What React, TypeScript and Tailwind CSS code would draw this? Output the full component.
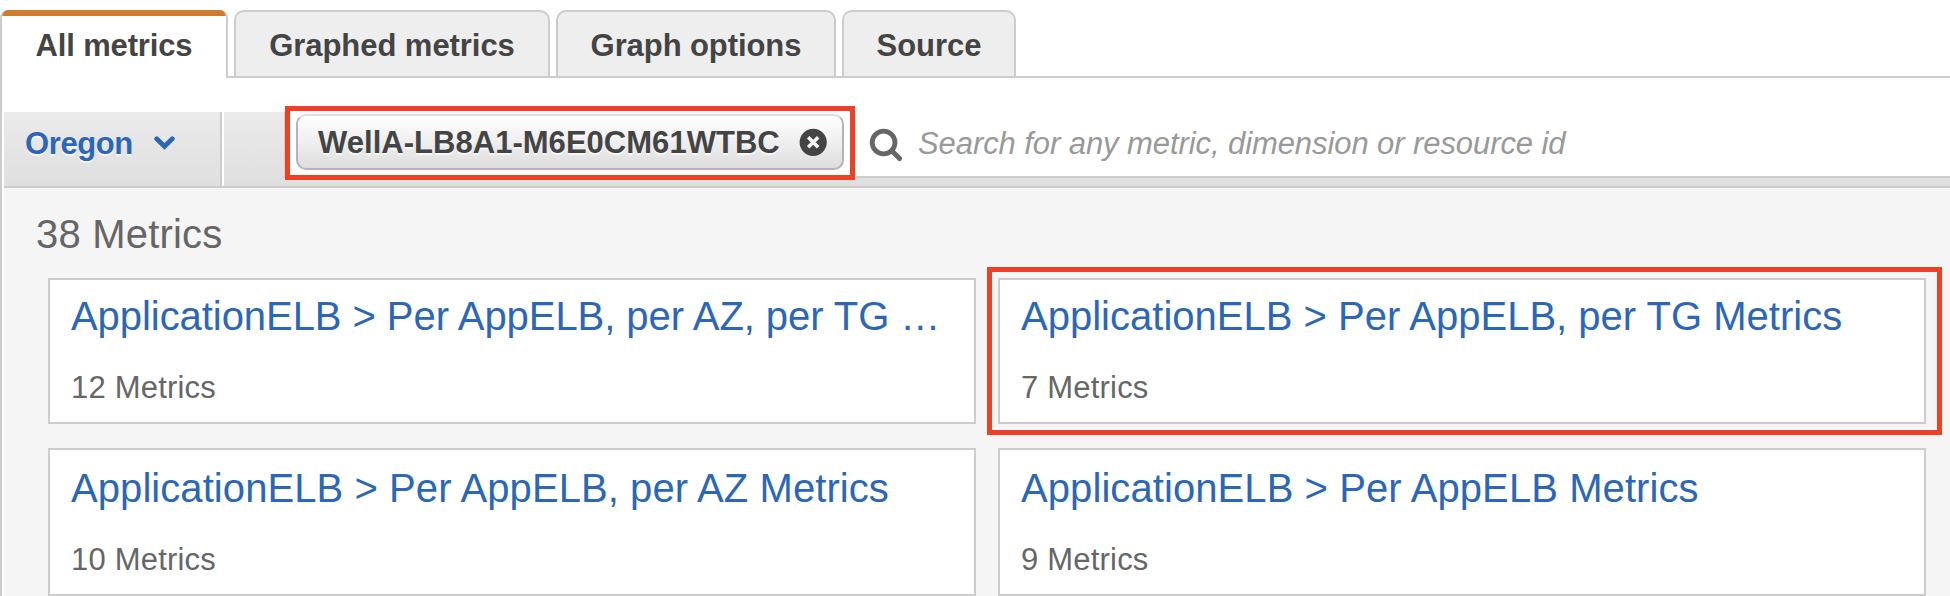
import React from "react";

const tabs = [
  { label: "Graphed metrics", width: "w-[316px]", text: "tracking-[-0.05px]" },
  { label: "Graph options", width: "w-[280px]", text: "tracking-[-0.08px]" },
  { label: "Source", width: "w-[174px]", text: "tracking-[-0.05px]" },
];

const cards = [
  { title: "ApplicationELB > Per AppELB, per AZ, per TG …", count: "12 Metrics", marked: false, text: "tracking-[-0.06px]" },
  { title: "ApplicationELB > Per AppELB, per TG Metrics", count: "7 Metrics", marked: true, text: "tracking-[0.01px]" },
  { title: "ApplicationELB > Per AppELB, per AZ Metrics", count: "10 Metrics", marked: false, text: "tracking-[0.07px]" },
  { title: "ApplicationELB > Per AppELB Metrics", count: "9 Metrics", marked: false, text: "tracking-[0.08px]" },
];

function Tabs() {
  return (
    <div className="flex h-[78px] items-end text-[31px] font-bold leading-[62px] text-[#444]">
      <div className="h-[68px] w-[228px] shrink-0 overflow-hidden rounded-t-[8px] border-x-2 border-[#ccc] bg-white">
        <div className="h-[6px] bg-[#d27b2c]" />
        <div className="-mt-px text-center tracking-[-0.15px]">All metrics</div>
      </div>
      <div className="flex h-[68px] flex-1 gap-[6px] border-b-2 border-[#ccc] pl-[6px]">
        {tabs.map((t) => (
          <div
            key={t.label}
            className={`${t.width} ${t.text} h-[66px] shrink-0 whitespace-nowrap rounded-t-[10px] border-2 border-b-0 border-[#ccc] bg-[#eee] pt-[3px] text-center`}
          >
            {t.label}
          </div>
        ))}
      </div>
    </div>
  );
}

function Toolbar() {
  return (
    <div className="mt-[34px] flex h-[76px] shrink-0 border-b-2 border-[#ccc] bg-linear-to-b from-[#ebebeb] to-[#dfdfdf]">
      <div className="flex w-[218px] shrink-0 border-r-2 border-[#ccc] pl-[21px] text-[31px] font-bold leading-[64px] text-[#2b66b8] [text-shadow:0_2px_0_rgba(255,255,255,0.7)]">
        <span className="w-[109px] whitespace-nowrap tracking-[-0.4px]">Oregon</span>
        <svg className="ml-[20px] mt-[23px] h-[17px] w-[22px]" viewBox="0 0 22 17" fill="none">
          <path d="M2.7 3.8 10.5 11.4l7.8-7.6" stroke="#2b66b8" strokeWidth="4.8" strokeLinecap="round" />
        </svg>
      </div>
      <div className="w-[2px] shrink-0 bg-white" />
      <div className="w-[60px] shrink-0" />
      <div className="flex h-[66px] flex-1 border-b-2 border-l-2 border-[#ccc] bg-white">
        <div className="relative ml-[10px] mt-[2px] flex h-[56px] w-[548px] shrink-0 rounded-[10px] border-2 border-[#b4b4b4] border-t-[#ddd] bg-linear-to-b from-white to-[#dedede] pl-[20px] text-[31px] font-bold leading-[54px] text-[#444] [text-shadow:0_2px_0_rgba(255,255,255,0.7)]">
          <span className="w-[464px] whitespace-nowrap tracking-[0.03px]">WellA-LB8A1-M6E0CM61WTBC</span>
          <svg className="ml-[17px] mt-[12px] h-[28px] w-[28px] shrink-0" viewBox="0 0 28 28">
            <circle cx="14.2" cy="14.3" r="13.6" fill="#444" />
            <path d="m9.2 9.3 10 10m0-10-10 10" stroke="#f4f4f4" strokeWidth="3.6" />
          </svg>
          <div className="pointer-events-none absolute -left-[13px] -top-[10px] h-[74px] w-[570px] border-[5px] border-[#ed4126]" />
        </div>
        <svg className="ml-[24px] mt-[15px] h-[36px] w-[36px] shrink-0" viewBox="0 0 36 36" fill="none" stroke="#666">
          <circle cx="15.6" cy="15.5" r="11.4" strokeWidth="4.8" />
          <path d="m24 24 7.6 7.6" strokeWidth="5" strokeLinecap="round" />
        </svg>
        <span className="ml-[14px] whitespace-nowrap text-[31px] italic leading-[64px] tracking-[-0.08px] text-[#999]">
          Search for any metric, dimension or resource id
        </span>
      </div>
    </div>
  );
}

export default function App() {
  return (
    <div className="h-[596px] w-[1950px] overflow-hidden bg-white font-['Liberation_Sans',Arial,sans-serif]">
      <Tabs />
      <div className="h-[518px] border-l-2 border-[#ccc] pl-[2px]">
        <div className="flex h-full flex-col">
          <Toolbar />
          <div className="flex-1 bg-[#f5f5f5] pl-[44px] pt-[26px]">
            <h1 className="-ml-[12px] text-[40px] leading-[40px] tracking-[0.2px] text-[#666]">38 Metrics</h1>
            <div className="mt-[24px] grid w-[1878px] grid-cols-2 grid-rows-[146px_148px] gap-x-[22px] gap-y-[24px]">
              {cards.map((c, i) => (
                <div
                  key={c.title}
                  className={`relative border-2 border-[#ccc] bg-white pl-[21px] ${i < 2 ? "pt-[16px]" : "pt-[18px]"}`}
                >
                  <div className={`${c.text} whitespace-nowrap text-[40px] leading-[40px] text-[#2b66b8]`}>{c.title}</div>
                  <div className="mt-[34px] text-[31px] leading-[36px] tracking-[0.2px] text-[#666]">{c.count}</div>
                  {c.marked && (
                    <div className="pointer-events-none absolute -left-[13px] -top-[13px] h-[168px] w-[955px] border-[5px] border-[#ed4126]" />
                  )}
                </div>
              ))}
            </div>
          </div>
        </div>
      </div>
    </div>
  );
}
